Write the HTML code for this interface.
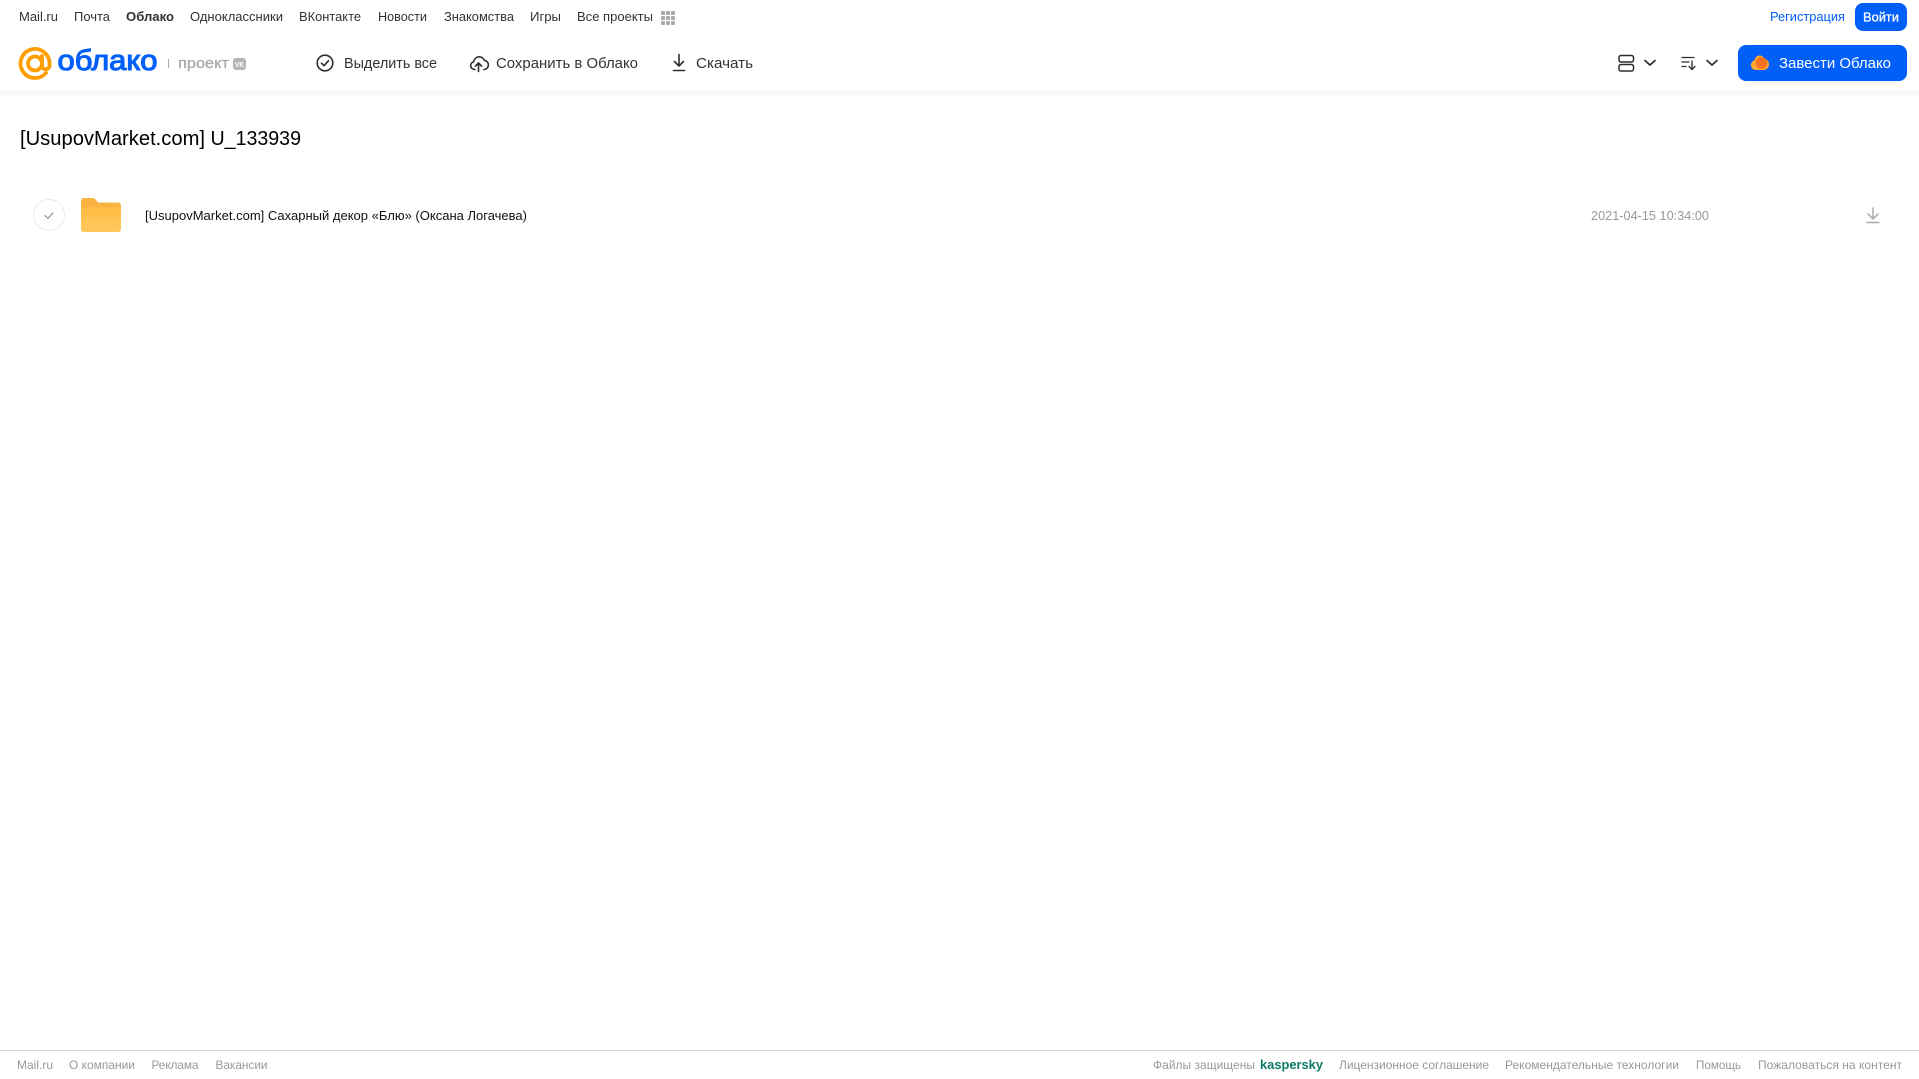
<!DOCTYPE html>
<html lang="ru">
<head>
<meta charset="utf-8">
<title>Облако Mail.ru</title>
<style>
html,body{margin:0;padding:0;background:#fff;width:1919px;height:1079px;overflow:hidden}
svg{display:block;position:absolute;left:0;top:0}
text{font-family:"Liberation Sans",sans-serif;white-space:pre}
.n{font-size:13px;fill:#333}
.t{font-size:15px;fill:#333}
.f{font-size:12px;fill:#999}
</style>
</head>
<body>
<svg width="1919" height="1079" viewBox="0 0 1919 1079" xmlns="http://www.w3.org/2000/svg">
<defs>
<linearGradient id="sh" x1="0" y1="0" x2="0" y2="1"><stop offset="0" stop-color="#f5f5f5"/><stop offset="1" stop-color="#fff"/></linearGradient>
<linearGradient id="fo" x1="0" y1="0" x2="0" y2="1"><stop offset="0" stop-color="#ffbc42"/><stop offset="1" stop-color="#ffc95f"/></linearGradient>
</defs>
<rect width="1919" height="1079" fill="#fff"/>
<rect x="0" y="90" width="1919" height="10" fill="url(#sh)"/>

<!-- top nav -->
<text class="n" x="19" y="21" textLength="39" lengthAdjust="spacingAndGlyphs">Mail.ru</text>
<text class="n" x="74" y="21" textLength="36" lengthAdjust="spacingAndGlyphs">Почта</text>
<text class="n" x="126" y="21" textLength="48" lengthAdjust="spacingAndGlyphs" font-weight="700">Облако</text>
<text class="n" x="190" y="21" textLength="93" lengthAdjust="spacingAndGlyphs">Одноклассники</text>
<text class="n" x="299" y="21" textLength="62" lengthAdjust="spacingAndGlyphs">ВКонтакте</text>
<text class="n" x="378" y="21" textLength="49" lengthAdjust="spacingAndGlyphs">Новости</text>
<text class="n" x="444" y="21" textLength="70" lengthAdjust="spacingAndGlyphs">Знакомства</text>
<text class="n" x="530" y="21" textLength="31" lengthAdjust="spacingAndGlyphs">Игры</text>
<text class="n" x="577" y="21" textLength="76" lengthAdjust="spacingAndGlyphs">Все проекты</text>
<g fill="#aaa">
<rect x="661" y="11" width="4" height="4" rx="1"/><rect x="666" y="11" width="4" height="4" rx="1"/><rect x="671" y="11" width="4" height="4" rx="1"/>
<rect x="661" y="16" width="4" height="4" rx="1"/><rect x="666" y="16" width="4" height="4" rx="1"/><rect x="671" y="16" width="4" height="4" rx="1"/>
<rect x="661" y="21" width="4" height="4" rx="1"/><rect x="666" y="21" width="4" height="4" rx="1"/><rect x="671" y="21" width="4" height="4" rx="1"/>
</g>
<text x="1770" y="21" font-size="13" fill="#005ff9" textLength="75" lengthAdjust="spacingAndGlyphs">Регистрация</text>
<rect x="1855" y="3" width="52" height="28" rx="8" fill="#005ff9"/>
<text x="1863" y="21.500" font-size="13" fill="#fff" stroke="#fff" stroke-width=".3" textLength="36" lengthAdjust="spacingAndGlyphs">Войти</text>

<!-- logo -->
<g fill="none" stroke="#ff9e00" stroke-width="3.800">
<circle cx="35" cy="63.500" r="7"/>
<path d="M42 56v9.500a3.750 3.750 0 0 0 7.500 0v-2A14.500 14.500 0 1 0 46.100 72.800" stroke-linecap="round"/>
</g>
<text x="57.500" y="70" font-size="29" fill="#005ff9" stroke="#005ff9" stroke-width="1.100" textLength="100" lengthAdjust="spacingAndGlyphs">облако</text>
<rect x="168" y="59" width="1" height="9" fill="#aaa"/>
<text x="178" y="68" font-size="15" fill="#aaa" stroke="#aaa" stroke-width=".3" textLength="51" lengthAdjust="spacingAndGlyphs">проект</text>
<rect x="233" y="58" width="13" height="12" rx="3" fill="#b5b5b5"/>
<text x="235" y="67" font-size="7" font-weight="700" fill="#fff" textLength="9" lengthAdjust="spacingAndGlyphs">VK</text>

<!-- toolbar -->
<g fill="none" stroke="#2c2d2e" stroke-width="1.600" stroke-linecap="round" stroke-linejoin="round">
<circle cx="325" cy="63" r="7.800"/>
<path d="M321.500 63.200l2.600 2.500 4.400-5"/>
<path d="M475 69.500h-.5a3.900 3.900 0 0 1-.8-7.700 5.500 5.500 0 0 1 10.600-1.500 4.700 4.700 0 0 1 .6 9.200h-1"/>
<path d="M478.500 71.500v-8M475.500 66l3-3 3 3"/>
<path d="M679 54.500v11.500M674.500 61.500l4.500 4.500 4.500-4.500M673.500 70.500h11"/>
</g>
<text class="t" x="344" y="68" textLength="93" lengthAdjust="spacingAndGlyphs">Выделить все</text>
<text class="t" x="496" y="68" textLength="142" lengthAdjust="spacingAndGlyphs">Сохранить в Облако</text>
<text class="t" x="696" y="68" textLength="57" lengthAdjust="spacingAndGlyphs">Скачать</text>

<!-- right toolbar -->
<g fill="none" stroke="#2c2d2e" stroke-width="1.500" stroke-linecap="round" stroke-linejoin="round">
<rect x="1619" y="55.500" width="14.500" height="6.500" rx="2"/>
<rect x="1619" y="64.500" width="14.500" height="6.500" rx="2"/>
<path d="M1645 60.500l5 4.500 5-4.500" stroke-width="1.700"/>
<path d="M1682 57.500h12M1682 62h7M1682 66.500h4M1692 61v8M1689 66.500l3 3 3-3" stroke-width="1.300"/>
<path d="M1707 60.500l5 4.500 5-4.500" stroke-width="1.700"/>
</g>
<rect x="1738" y="45" width="169" height="36" rx="8" fill="#005ff9"/>
<path d="M1756 70c-3 0-5-2-5-5 0-2.500 1.500-4.300 3.500-4.800 .6-2.700 2.500-4.700 5-4.700 2.300 0 4 1.300 4.800 3.300 2.700 .3 4.700 2.600 4.700 5.400 0 3.200-2.500 5.800-5.500 5.800z" fill="#ffa930"/>
<circle cx="1761.500" cy="63" r="5.800" fill="#f5701f"/>
<text x="1779" y="68" font-size="15" fill="#fff" textLength="112" lengthAdjust="spacingAndGlyphs">Завести Облако</text>

<!-- title -->
<text x="20" y="145" font-size="20" fill="#000" textLength="185" lengthAdjust="spacingAndGlyphs">[UsupovMarket.com]</text>
<text x="210.500" y="145" font-size="20" fill="#000" textLength="90.500" lengthAdjust="spacingAndGlyphs">U_133939</text>

<!-- row -->
<circle cx="49" cy="215" r="15.500" fill="#fff" stroke="#ebebeb"/>
<path d="M45 215.500l3 2.800 5-5.300" fill="none" stroke="#999" stroke-width="1.300" stroke-linecap="round" stroke-linejoin="round"/>
<path d="M81 201a3 3 0 0 1 3-3h8c2 0 3 .6 4 2l2 2.500h20a3 3 0 0 1 3 3V229a3 3 0 0 1-3 3H84a3 3 0 0 1-3-3z" fill="#f8b340"/>
<path d="M81 209a2 2 0 0 1 2-2h36a2 2 0 0 1 2 2v20a3 3 0 0 1-3 3H84a3 3 0 0 1-3-3z" fill="url(#fo)"/>
<text x="145" y="220" font-size="13" fill="#111" textLength="382" lengthAdjust="spacingAndGlyphs">[UsupovMarket.com] Сахарный декор «Блю» (Оксана Логачева)</text>
<text x="1591" y="220" font-size="13" fill="#999" textLength="118" lengthAdjust="spacingAndGlyphs">2021-04-15 10:34:00</text>
<path d="M1873 207.500v11M1867.500 213.500l5.500 5.500 5.500-5.500M1866.500 222.500h13" fill="none" stroke="#aaa" stroke-width="1.500"/>

<!-- footer -->
<rect x="0" y="1050" width="1919" height="1" fill="#d9d9d9"/>
<text class="f" x="17" y="1069" textLength="36" lengthAdjust="spacingAndGlyphs">Mail.ru</text>
<text class="f" x="69" y="1069" textLength="66" lengthAdjust="spacingAndGlyphs">О компании</text>
<text class="f" x="151.500" y="1069" textLength="47" lengthAdjust="spacingAndGlyphs">Реклама</text>
<text class="f" x="215.500" y="1069" textLength="52" lengthAdjust="spacingAndGlyphs">Вакансии</text>
<text class="f" x="1153" y="1069" textLength="102" lengthAdjust="spacingAndGlyphs">Файлы защищены</text>
<text x="1260" y="1069" font-size="13" font-weight="700" fill="#0f7a66" textLength="63" lengthAdjust="spacingAndGlyphs">kaspersky</text>
<text class="f" x="1339" y="1069" textLength="150" lengthAdjust="spacingAndGlyphs">Лицензионное соглашение</text>
<text class="f" x="1505" y="1069" textLength="174" lengthAdjust="spacingAndGlyphs">Рекомендательные технологии</text>
<text class="f" x="1696" y="1069" textLength="45" lengthAdjust="spacingAndGlyphs">Помощь</text>
<text class="f" x="1758" y="1069" textLength="144" lengthAdjust="spacingAndGlyphs">Пожаловаться на контент</text>
</svg>
</body>
</html>
